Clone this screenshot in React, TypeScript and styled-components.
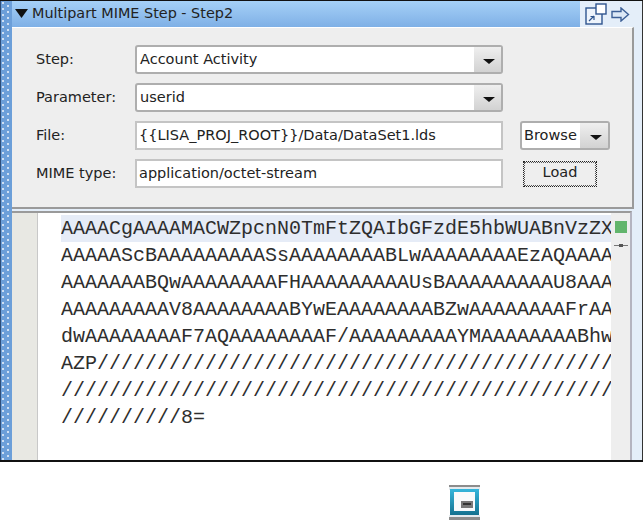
import styled, { createGlobalStyle } from 'styled-components';

const GlobalStyle = createGlobalStyle`
  html, body {
    margin: 0;
    padding: 0;
    background: #fff;
  }
  body {
    width: 643px;
    height: 520px;
    overflow: hidden;
    font-family: "DejaVu Sans", "Liberation Sans", sans-serif;
  }
`;

const Frame = styled.div`
  display: flex;
  width: 643px;
  height: 462px;
  box-sizing: border-box;
  border-top: 1px solid #111;
  border-bottom: 2px solid #111;
  background: #e4eef9;
`;

const DockStrip = styled.div`
  width: 12px;
  flex: none;
  border-left: 1px solid #2f4f7a;
  box-sizing: border-box;
  background-color: #6c9fd9;
  background-image:
    radial-gradient(circle at 2px 2px, #cfe0f4 0.8px, transparent 1.2px),
    radial-gradient(circle at 7px 5px, #cfe0f4 0.8px, transparent 1.2px);
  background-size: 10px 6px;
`;

const Main = styled.div`
  flex: 1;
  min-width: 0;
  display: flex;
  flex-direction: column;
  border-right: 1px solid #333;
`;

const HeaderRow = styled.div`
  display: flex;
  height: 26px;
  flex: none;
`;

const TitleBar = styled.div`
  width: 568px;
  display: flex;
  align-items: center;
  gap: 4px;
  padding: 0 0 2px 3px;
  box-sizing: border-box;
  background: linear-gradient(#a5d0f7, #7fb0e6);
  color: #222;
  font-size: 14.4px;
`;

const HeaderIcons = styled.div`
  display: flex;
  align-items: center;
  gap: 4px;
  padding-left: 5px;
`;

const FormPanel = styled.div`
  height: 182px;
  flex: none;
  margin-right: 8px;
  box-sizing: border-box;
  padding: 17px 24px 0 24px;
  background: #eeeeee;
  border-top: 1px solid #fff;
  border-right: 2px solid #9a9a9a;
  border-bottom: 2px solid #9a9a9a;
  display: grid;
  grid-template-columns: 99px 368px 106px;
  grid-auto-rows: 29px;
  row-gap: 9px;
  align-items: center;
`;

const FieldLabel = styled.div`
  font-size: 14.5px;
  color: #222;
  padding-bottom: 2px;
`;

const Combo = styled.div`
  height: 29px;
  box-sizing: border-box;
  border: 2px solid #aeaeae;
  border-radius: 3px;
  display: flex;
  background: #fff;
  color: #222;
  font-size: 14.5px;
`;

const ComboText = styled.div<{ $pad?: number }>`
  flex: 1;
  display: flex;
  align-items: center;
  padding: 0 0 2px ${(p) => p.$pad ?? 3}px;
  margin: 2px 0;
  background: #fff;
`;

const ComboArrow = styled.div<{ $w?: number }>`
  width: ${(p) => p.$w ?? 27}px;
  flex: none;
  display: flex;
  align-items: center;
  justify-content: center;
  background: linear-gradient(#efefef, #d2d2d2);
  padding: 3px 0 0 3px;
  box-sizing: border-box;

  &::after {
    content: '';
    border-left: 6px solid transparent;
    border-right: 6px solid transparent;
    border-top: 5px solid #111;
  }
`;

const TextField = styled.div`
  height: 29px;
  box-sizing: border-box;
  border: 2px solid #c4c4c4;
  background: #fff;
  display: flex;
  align-items: center;
  padding: 0 0 2px 2px;
  color: #222;
  font-size: 14.5px;
`;

const BrowseCell = styled.div`
  margin-left: 17px;
  width: 90px;
`;

const LoadButton = styled.div`
  margin-left: 20px;
  width: 74px;
  height: 26px;
  box-sizing: border-box;
  border: 1px dotted #222;
  outline: 1px dotted #555;
  outline-offset: -2px;
  display: flex;
  align-items: center;
  justify-content: center;
  padding-bottom: 4px;
  color: #222;
  font-size: 14.5px;
`;

const Editor = styled.div`
  flex: 1;
  min-height: 0;
  margin-top: 2px;
  margin-right: 10px;
  display: flex;
  border-top: 2px solid #9a9a9a;
  border-right: 2px solid #b4b4c0;
  background: #fff;
`;

const Gutter = styled.div`
  width: 25px;
  flex: none;
  background: #e8e8e3;
  border-right: 1px solid #c8c8c8;
`;

const Code = styled.div`
  flex: 1;
  min-width: 0;
  overflow: hidden;
  padding-top: 2px;
`;

const CodeLine = styled.div<{ $active?: boolean }>`
  height: 27px;
  line-height: 28px;
  margin-left: 23px;
  white-space: pre;
  overflow: hidden;
  font-family: "Liberation Mono", monospace;
  font-size: 20px;
  color: #2e2e2e;
  background: ${(p) => (p.$active ? '#e6ecf7' : 'transparent')};
`;

const MarkerColumn = styled.div`
  width: 19px;
  flex: none;
  background: #eeeeee;
  display: flex;
  flex-direction: column;
  align-items: center;
  padding-top: 8px;
`;

const GreenMark = styled.div`
  width: 12px;
  height: 12px;
  background: #62b56c;
`;

const TickMark = styled.div`
  position: relative;
  width: 14px;
  height: 1px;
  margin-top: 12px;
  background: #777;

  &::after {
    content: '';
    position: absolute;
    left: 5px;
    top: -1px;
    width: 4px;
    height: 3px;
    background: #555;
  }
`;

const BottomArea = styled.div`
  padding: 23px 0 0 449px;
`;

const BlurredIcon = styled.svg`
  display: block;
  filter: blur(0.6px);
`;

const lines = [
  'AAAACgAAAAMACWZpcnN0TmFtZQAIbGFzdE5hbWUABnVzZX',
  'AAAAAScBAAAAAAAAASsAAAAAAAABLwAAAAAAAAEzAQAAAA',
  'AAAAAAABQwAAAAAAAAFHAAAAAAAAAUsBAAAAAAAAAU8AAA',
  'AAAAAAAAAV8AAAAAAAABYwEAAAAAAAABZwAAAAAAAAFrAA',
  'dwAAAAAAAAF7AQAAAAAAAAF/AAAAAAAAAYMAAAAAAAABhw',
  'AZP///////////////////////////////////////////',
  '//////////////////////////////////////////////',
  '//////////8=',
];

function Select({ value }: { value: string }) {
  return (
    <Combo>
      <ComboText>{value}</ComboText>
      <ComboArrow />
    </Combo>
  );
}

function CollapseIcon() {
  return (
    <svg width="13" height="9" viewBox="0 0 13 9">
      <path d="M0 0h13L6.500 9z" fill="#111" />
    </svg>
  );
}

function RestoreIcon() {
  return (
    <svg width="22" height="22" viewBox="0 0 22 22" fill="none">
      <rect x="1" y="5" width="16" height="16" fill="#eef4fb" stroke="#2f558f" strokeWidth="1.4" />
      <rect x="11" y="1" width="10" height="10" fill="#fff" stroke="#2f558f" strokeWidth="1.4" />
      <path d="M4 18l5-5M5.500 13.500H9V17" stroke="#2f558f" strokeWidth="1.2" />
    </svg>
  );
}

function ArrowIcon() {
  return (
    <svg width="19" height="15" viewBox="0 0 19 15" fill="none">
      <path d="M1 4.500h9V1l7.500 6.500L10 14v-3.500H1z" fill="#dce8f6" stroke="#3c5f96" strokeWidth="1.4" />
    </svg>
  );
}

function WindowIcon() {
  return (
    <BlurredIcon width="31" height="35" viewBox="0 0 31 35">
      <defs>
        <linearGradient id="windowFrame" x1="0" y1="0" x2="0" y2="1">
          <stop offset="0" stopColor="#35b6dc" />
          <stop offset="1" stopColor="#14718f" />
        </linearGradient>
      </defs>
      <rect width="31" height="2" fill="#8c8c8c" />
      <rect y="2" width="31" height="3" fill="#e4eaee" />
      <rect x="1" y="4" width="29" height="26" fill="url(#windowFrame)" />
      <rect x="5" y="7" width="21" height="19" fill="#f8fafb" />
      <rect x="12" y="16" width="12" height="7" fill="#777" />
      <rect x="14" y="18" width="8" height="2" fill="#333" />
      <rect y="30" width="31" height="2" fill="#e4eaee" />
      <rect y="32" width="31" height="3" fill="#8c8c8c" />
    </BlurredIcon>
  );
}

export default function App() {
  return (
    <>
      <GlobalStyle />
      <Frame>
        <DockStrip />
        <Main>
          <HeaderRow>
            <TitleBar>
              <CollapseIcon />
              Multipart MIME Step - Step2
            </TitleBar>
            <HeaderIcons>
              <RestoreIcon />
              <ArrowIcon />
            </HeaderIcons>
          </HeaderRow>
          <FormPanel>
            <FieldLabel>Step:</FieldLabel>
            <Select value="Account Activity" />
            <div />
            <FieldLabel>Parameter:</FieldLabel>
            <Select value="userid" />
            <div />
            <FieldLabel>File:</FieldLabel>
            <TextField>{'{{LISA_PROJ_ROOT}}/Data/DataSet1.lds'}</TextField>
            <BrowseCell>
              <Combo>
                <ComboText $pad={2}>Browse</ComboText>
                <ComboArrow $w={28} />
              </Combo>
            </BrowseCell>
            <FieldLabel>MIME type:</FieldLabel>
            <TextField>application/octet-stream</TextField>
            <LoadButton>Load</LoadButton>
          </FormPanel>
          <Editor>
            <Gutter />
            <Code>
              {lines.map((line, i) => (
                <CodeLine key={i} $active={i === 0}>
                  {line}
                </CodeLine>
              ))}
            </Code>
            <MarkerColumn>
              <GreenMark />
              <TickMark />
            </MarkerColumn>
          </Editor>
        </Main>
      </Frame>
      <BottomArea>
        <WindowIcon />
      </BottomArea>
    </>
  );
}
